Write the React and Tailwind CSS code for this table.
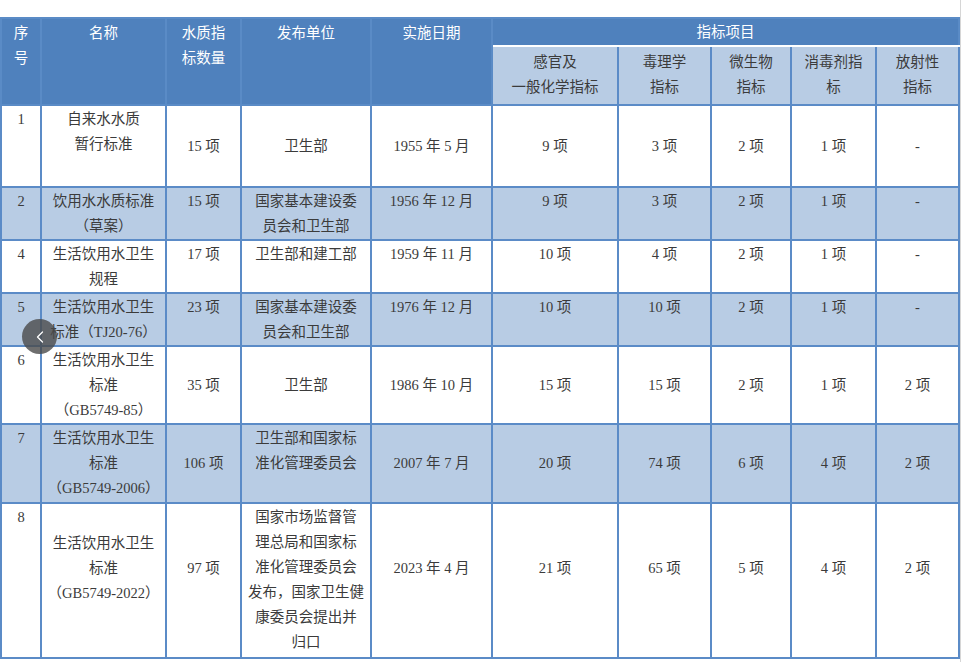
import { ChevronLeft } from 'lucide-react';

const cols = [40, 125, 75, 130, 121, 126, 93, 80, 85, 83];

// v: 't' top, 'm' middle, 'mb' middle with a blank trailing line
const rows = [
  {
    h: 82, shade: false,
    cells: [
      { t: ['1'], v: 't' },
      { t: ['自来水水质', '暂行标准'], v: 't' },
      { t: ['15 项'], v: 'm' },
      { t: ['卫生部'], v: 'm' },
      { t: ['1955 年 5 月'], v: 'm' },
      { t: ['9 项'], v: 'm' },
      { t: ['3 项'], v: 'm' },
      { t: ['2 项'], v: 'm' },
      { t: ['1 项'], v: 'm' },
      { t: ['-'], v: 'm' },
    ],
  },
  {
    h: 53, shade: true,
    cells: [
      { t: ['2'], v: 't' },
      { t: ['饮用水水质标准', '（草案）'], v: 't' },
      { t: ['15 项'], v: 't' },
      { t: ['国家基本建设委', '员会和卫生部'], v: 't' },
      { t: ['1956 年 12 月'], v: 't' },
      { t: ['9 项'], v: 't' },
      { t: ['3 项'], v: 't' },
      { t: ['2 项'], v: 't' },
      { t: ['1 项'], v: 't' },
      { t: ['-'], v: 't' },
    ],
  },
  {
    h: 53, shade: false,
    cells: [
      { t: ['4'], v: 't' },
      { t: ['生活饮用水卫生', '规程'], v: 't' },
      { t: ['17 项'], v: 't' },
      { t: ['卫生部和建工部'], v: 't' },
      { t: ['1959 年 11 月'], v: 't' },
      { t: ['10 项'], v: 't' },
      { t: ['4 项'], v: 't' },
      { t: ['2 项'], v: 't' },
      { t: ['1 项'], v: 't' },
      { t: ['-'], v: 't' },
    ],
  },
  {
    h: 53, shade: true,
    cells: [
      { t: ['5'], v: 't' },
      { t: ['生活饮用水卫生', '标准（TJ20-76）'], v: 't' },
      { t: ['23 项'], v: 't' },
      { t: ['国家基本建设委', '员会和卫生部'], v: 't' },
      { t: ['1976 年 12 月'], v: 't' },
      { t: ['10 项'], v: 't' },
      { t: ['10 项'], v: 't' },
      { t: ['2 项'], v: 't' },
      { t: ['1 项'], v: 't' },
      { t: ['-'], v: 't' },
    ],
  },
  {
    h: 78, shade: false,
    cells: [
      { t: ['6'], v: 't' },
      { t: ['生活饮用水卫生', '标准', '（GB5749-85）'], v: 't' },
      { t: ['35 项'], v: 'm' },
      { t: ['卫生部'], v: 'm' },
      { t: ['1986 年 10 月'], v: 'm' },
      { t: ['15 项'], v: 'm' },
      { t: ['15 项'], v: 'm' },
      { t: ['2 项'], v: 'm' },
      { t: ['1 项'], v: 'm' },
      { t: ['2 项'], v: 'm' },
    ],
  },
  {
    h: 79, shade: true,
    cells: [
      { t: ['7'], v: 't' },
      { t: ['生活饮用水卫生', '标准', '（GB5749-2006）'], v: 't' },
      { t: ['106 项'], v: 'm' },
      { t: ['卫生部和国家标', '准化管理委员会'], v: 't' },
      { t: ['2007 年 7 月'], v: 'm' },
      { t: ['20 项'], v: 'm' },
      { t: ['74 项'], v: 'm' },
      { t: ['6 项'], v: 'm' },
      { t: ['4 项'], v: 'm' },
      { t: ['2 项'], v: 'm' },
    ],
  },
  {
    h: 155, shade: false,
    cells: [
      { t: ['8'], v: 't' },
      { t: ['生活饮用水卫生', '标准', '（GB5749-2022）'], v: 'mb' },
      { t: ['97 项'], v: 'mb' },
      {
        t: ['国家市场监督管', '理总局和国家标', '准化管理委员会', '发布，国家卫生健', '康委员会提出并', '归口'],
        v: 't',
      },
      { t: ['2023 年 4 月'], v: 'mb' },
      { t: ['21 项'], v: 'mb' },
      { t: ['65 项'], v: 'mb' },
      { t: ['5 项'], v: 'mb' },
      { t: ['4 项'], v: 'mb' },
      { t: ['2 项'], v: 'mb' },
    ],
  },
];

const subHeads = [
  ['感官及', '一般化学指标'],
  ['毒理学', '指标'],
  ['微生物', '指标'],
  ['消毒剂指', '标'],
  ['放射性', '指标'],
];

const vClass = {
  t: 'align-top pt-[1px]',
  m: 'align-middle',
  mb: 'align-middle pb-[24px]',
};

const Lines = ({ t }) =>
  t.map((line, i) => (
    <div key={i} className="whitespace-nowrap">
      {line}
    </div>
  ));

export default function App() {
  return (
    <div
      className="relative w-[961px] h-[662px] bg-white overflow-hidden border-r border-[#d6d6d6]"
      style={{ fontFamily: '"Liberation Serif", "Noto Sans CJK SC", serif' }}
    >
      <div className="pt-[17px]">
        <table className="table-fixed border-collapse w-[958px] text-[14.5px] leading-[25px] text-[#3b3b3b]">
          <colgroup>
            {cols.map((w, i) => (
              <col key={i} style={{ width: w }} />
            ))}
          </colgroup>
          <thead>
            <tr className="h-[27px] bg-[#4f81bd] text-white">
              <th rowSpan={2} className="font-normal align-top pt-[2px] px-0 border-2 border-[#5a8bc6]">
                序<br />号
              </th>
              <th rowSpan={2} className="font-normal align-top pt-[2px] border-2 border-[#5a8bc6]">
                名称
              </th>
              <th rowSpan={2} className="font-normal align-top pt-[2px] border-2 border-[#5a8bc6]">
                水质指<br />标数量
              </th>
              <th rowSpan={2} className="font-normal align-top pt-[2px] border-2 border-[#5a8bc6]">
                发布单位
              </th>
              <th rowSpan={2} className="font-normal align-top pt-[2px] border-2 border-[#5a8bc6]">
                实施日期
              </th>
              <th colSpan={5} className="font-normal align-top pt-[1px] border-2 border-[#5a8bc6] border-b-white">
                指标项目
              </th>
            </tr>
            <tr className="h-[59px]">
              {subHeads.map((s, i) => (
                <th
                  key={i}
                  className={`font-normal align-top pt-[3px] bg-[#b8cce4] text-[#3b3b3b] border-2 border-[#5b8bc7] border-t-white ${
                    i === 0 ? 'border-l-white' : ''
                  }`}
                >
                  <Lines t={s} />
                </th>
              ))}
            </tr>
          </thead>
          <tbody>
            {rows.map((r, ri) => (
              <tr key={ri} style={{ height: r.h }} className={r.shade ? 'bg-[#b8cce4]' : 'bg-white'}>
                {r.cells.map((c, ci) => (
                  <td
                    key={ci}
                    className={`text-center px-0 border-2 border-[#5b8bc7] ${vClass[c.v]}`}
                  >
                    <Lines t={c.t} />
                  </td>
                ))}
              </tr>
            ))}
          </tbody>
        </table>
      </div>

      <button
        type="button"
        className="absolute left-[22px] top-[319px] w-[35px] h-[35px] rounded-full bg-[#4a4a4a]/80 flex items-center justify-center"
      >
        <ChevronLeft className="w-[20px] h-[20px] text-white" strokeWidth={1.5} />
      </button>
    </div>
  );
}
